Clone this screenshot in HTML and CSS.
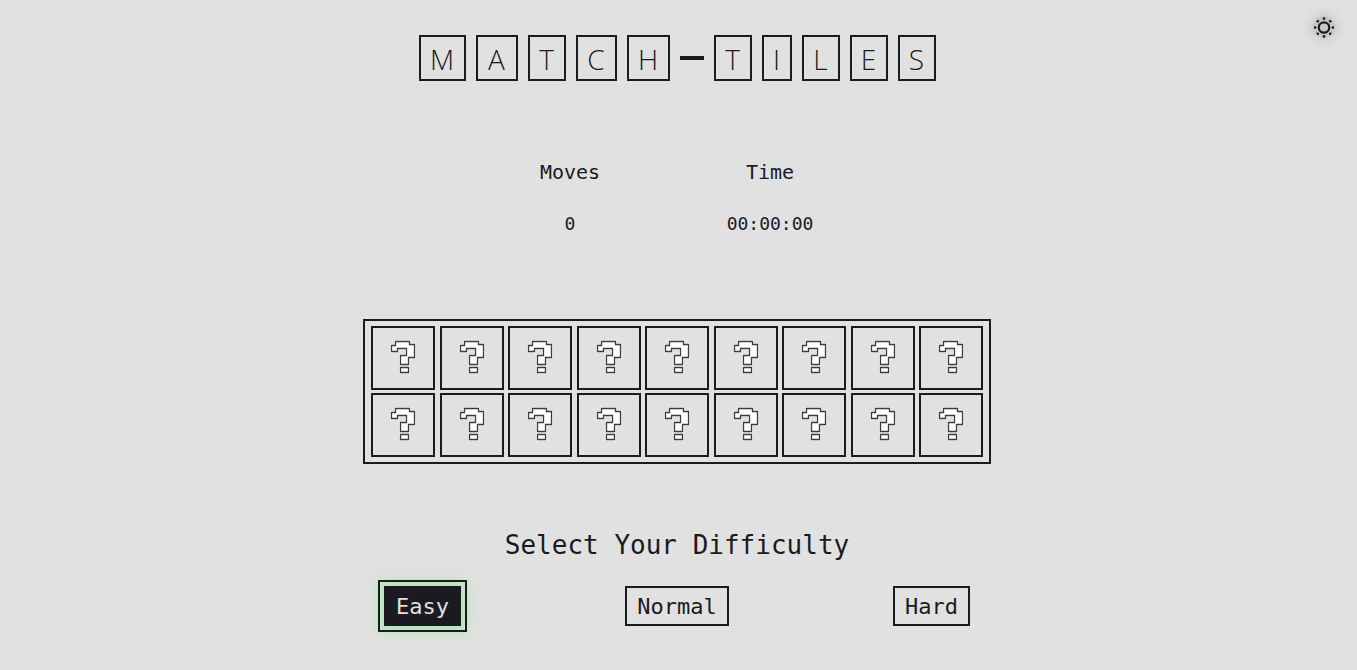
FILE: index.html
```html
<!DOCTYPE html>
<html lang="en">
<head>
<meta charset="utf-8">
<title>Match-Tiles</title>
<link rel="stylesheet" href="styles.css">
</head>
<body>
<svg class="symbols" aria-hidden="true">
  <symbol id="question" viewBox="-2 -2 28 37">
    <path class="halo" d="M4.5 .5H18.5V3.5H23.5V16.5H17.5V23.5H9.5V14.5H15.5V7.5H6.5V10.5H.5V4.5H4.5ZM9.5 26.5H17.5V31.5H9.5Z"/>
    <path class="line" d="M4.5 .5H18.5V3.5H23.5V16.5H17.5V23.5H9.5V14.5H15.5V7.5H6.5V10.5H.5V4.5H4.5ZM9.5 26.5H17.5V31.5H9.5Z"/>
  </symbol>
</svg>
<button class="theme" type="button" aria-label="Toggle theme">
  <svg width="22" height="22" viewBox="0 0 22 22">
    <circle cx="11" cy="11.5" r="5.2" fill="none" stroke="#1b1a20" stroke-width="2.2"/>
    <g fill="#1b1a20">
      <circle cx="11" cy="2.6" r="1.3"/><circle cx="11" cy="20.4" r="1.3"/>
      <circle cx="2.1" cy="11.5" r="1.3"/><circle cx="19.9" cy="11.5" r="1.3"/>
      <circle cx="4.8" cy="5.3" r="1.3"/><circle cx="17.2" cy="5.3" r="1.3"/>
      <circle cx="4.8" cy="17.7" r="1.3"/><circle cx="17.2" cy="17.7" r="1.3"/>
    </g>
  </svg>
</button>
<main class="game">
  <h1 class="title">
    <span class="letter m">M</span><span class="letter a">A</span><span class="letter">T</span><span class="letter c">C</span><span class="letter h">H</span>
    <span class="dash"></span>
    <span class="letter">T</span><span class="letter i">I</span><span class="letter">L</span><span class="letter">E</span><span class="letter">S</span>
  </h1>
  <section class="stats">
    <div class="stat"><h2 class="stat-name">Moves</h2><p class="stat-value">0</p></div>
    <div class="stat"><h2 class="stat-name">Time</h2><p class="stat-value">00:00:00</p></div>
  </section>
  <section class="board" aria-label="Tiles">
    <button class="tile" type="button" aria-label="Tile 1"><svg><use href="#question"/></svg></button>
    <button class="tile" type="button" aria-label="Tile 2"><svg><use href="#question"/></svg></button>
    <button class="tile" type="button" aria-label="Tile 3"><svg><use href="#question"/></svg></button>
    <button class="tile" type="button" aria-label="Tile 4"><svg><use href="#question"/></svg></button>
    <button class="tile" type="button" aria-label="Tile 5"><svg><use href="#question"/></svg></button>
    <button class="tile" type="button" aria-label="Tile 6"><svg><use href="#question"/></svg></button>
    <button class="tile" type="button" aria-label="Tile 7"><svg><use href="#question"/></svg></button>
    <button class="tile" type="button" aria-label="Tile 8"><svg><use href="#question"/></svg></button>
    <button class="tile" type="button" aria-label="Tile 9"><svg><use href="#question"/></svg></button>
    <button class="tile" type="button" aria-label="Tile 10"><svg><use href="#question"/></svg></button>
    <button class="tile" type="button" aria-label="Tile 11"><svg><use href="#question"/></svg></button>
    <button class="tile" type="button" aria-label="Tile 12"><svg><use href="#question"/></svg></button>
    <button class="tile" type="button" aria-label="Tile 13"><svg><use href="#question"/></svg></button>
    <button class="tile" type="button" aria-label="Tile 14"><svg><use href="#question"/></svg></button>
    <button class="tile" type="button" aria-label="Tile 15"><svg><use href="#question"/></svg></button>
    <button class="tile" type="button" aria-label="Tile 16"><svg><use href="#question"/></svg></button>
    <button class="tile" type="button" aria-label="Tile 17"><svg><use href="#question"/></svg></button>
    <button class="tile" type="button" aria-label="Tile 18"><svg><use href="#question"/></svg></button>
  </section>
  <h2 class="prompt">Select Your Difficulty</h2>
  <div class="levels">
    <button class="level selected" type="button">Easy</button>
    <button class="level" type="button">Normal</button>
    <button class="level" type="button">Hard</button>
  </div>
</main>
</body>
</html>
```
FILE: styles.css
```css
* {
  box-sizing: border-box;
  margin: 0;
}

body {
  background: #e1e1e1;
  color: #1b1a20;
  font-family: Consolas, "DejaVu Sans Mono", monospace;
}

button {
  padding: 0;
  border: 0;
  background: none;
  color: inherit;
  font: inherit;
}

.symbols {
  position: absolute;
  width: 0;
  height: 0;
}

.theme {
  position: absolute;
  top: 16px;
  right: 22px;
  width: 22px;
  height: 22px;
  border-radius: 50%;
  background: #c6c6c8;
  box-shadow: 0 0 12px 2px #c6c6c9;
}

.theme svg {
  display: block;
}

.game {
  display: flex;
  flex-direction: column;
  align-items: center;
  padding: 35px 3px 38px 0;
}

.title {
  display: flex;
  align-items: center;
  gap: 10px;
  font-family: "Segoe UI", "Open Sans", sans-serif;
  font-size: 28px;
  font-weight: 300;
  line-height: 42px;
}

.letter {
  width: 38px;
  height: 46px;
  padding-top: 1px;
  border: 2px solid;
  text-align: center;
}

.m { width: 47px; }
.a { width: 42px; }
.c { width: 41px; }
.h { width: 43px; }
.i { width: 30px; }

.dash {
  width: 24px;
  height: 4px;
  background: #1b1a20;
}

.stats {
  display: grid;
  grid-template-columns: 200px 200px;
  margin-top: 78px;
  padding-right: 14px;
  text-align: center;
}

.stat-name {
  font-size: 20px;
  font-weight: 400;
  line-height: 26px;
}

.stat-value {
  margin-top: 26px;
  font-size: 18px;
  line-height: 26px;
}

.board {
  display: grid;
  grid-template-columns: repeat(9, 64px);
  justify-content: space-between;
  row-gap: 3px;
  width: 628px;
  max-width: 100%;
  margin-top: 82px;
  padding: 5px 6px;
  border: 2px solid;
}

.tile {
  display: grid;
  place-items: center;
  height: 64px;
  padding-bottom: 1px;
  border: 2px solid;
}

.tile svg {
  width: 28px;
  height: 37px;
}

.halo {
  fill: none;
  stroke: #f2f2f2;
  stroke-width: 3;
}

.line {
  fill: #fff;
  stroke: #3c3c3c;
  stroke-width: 1.3;
}

.prompt {
  margin-top: 64px;
  font-size: 26px;
  font-weight: 400;
  line-height: 34px;
}

.levels {
  display: flex;
  justify-content: space-between;
  width: 586px;
  max-width: 100%;
  margin-top: 24px;
}

.level {
  padding: 6px 10px 4px;
  border: 2px solid;
  font-size: 22px;
  line-height: 26px;
}

.selected {
  border-color: #1b1a20;
  outline: 2px solid #1b1a20;
  outline-offset: 4px;
  background: #1b1a20;
  box-shadow: 0 0 12px 5px #a9e8a9;
  color: #e1e1e1;
}
```
